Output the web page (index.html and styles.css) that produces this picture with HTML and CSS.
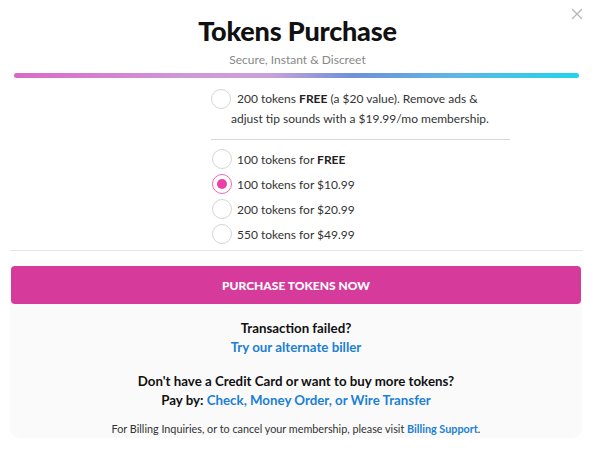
FILE: index.html
```html
<!DOCTYPE html>
<html>
<head>
<meta charset="utf-8">
<link rel="stylesheet" href="styles.css">
</head>
<body>
<div class="modal">
  <button class="close" aria-label="Close">
    <svg width="12" height="12" viewBox="0 0 12 12"><path d="M1 1L11 11M11 1L1 11" stroke="#b8b8b8" stroke-width="1.4" fill="none"/></svg>
  </button>
  <header class="head">
    <h1 class="title">Tokens Purchase</h1>
    <p class="subtitle">Secure, Instant &amp; Discreet</p>
  </header>
  <div class="bar"></div>
  <div class="options">
    <label class="opt opt-member"><span class="radio"></span>200 tokens <b>FREE</b> (a $20 value). Remove ads &amp;<br>adjust tip sounds with a $19.99/mo membership.</label>
    <div class="sep"></div>
    <label class="opt"><span class="radio"></span>100 tokens for <b>FREE</b></label>
    <label class="opt"><span class="radio on"></span>100 tokens for $10.99</label>
    <label class="opt"><span class="radio"></span>200 tokens for $20.99</label>
    <label class="opt"><span class="radio"></span>550 tokens for $49.99</label>
  </div>
  <div class="rule"></div>
  <button class="buy">PURCHASE TOKENS NOW</button>
  <div class="foot">
    <p class="q">Transaction failed?<br><a href="#">Try our alternate biller</a></p>
    <p class="q q2">Don't have a Credit Card or want to buy more tokens?<br>Pay by: <a href="#">Check, Money Order, or Wire Transfer</a></p>
    <p class="small">For Billing Inquiries, or to cancel your membership, please visit <a href="#">Billing Support</a>.</p>
  </div>
</div>
</body>
</html>
```
FILE: styles.css
```css
* { box-sizing: border-box; }
body { margin: 0; background: #fff; font-family: Lato, "Noto Sans", sans-serif; color: #333; }
.modal { position: relative; width: 595px; height: 451px; }
.close { position: absolute; top: 8px; right: 12px; border: 0; background: none; padding: 0; width: 12px; height: 12px; line-height: 0; }
.head { text-align: center; padding-top: 15px; }
.title { margin: 0; font-size: 27px; line-height: 32px; font-weight: 900; color: #111; letter-spacing: -0.2px; }
.subtitle { margin: 5px 0 0; font-size: 12px; line-height: 16px; color: #888; }
.bar { height: 5px; margin: 5px 16px 0 14px; border-radius: 3px;
  background: linear-gradient(90deg, #da68c9 0%, #cf98d8 30%, #c9a2dc 45%, #6f90d8 60%, #5fb6e2 78%, #20d4ee 100%); }
.options { width: 299px; margin: 11px 0 0 211px; }
.opt { display: block; font-size: 12px; line-height: 25px; height: 25px; color: #333; }
.opt b { font-weight: 700; color: #222; }
.opt-member { line-height: 20px; height: auto; padding-left: 20px; }
.radio { display: inline-block; width: 20px; height: 20px; border: 1px solid #d4d4d4; border-radius: 50%; vertical-align: top; margin: 2px 5px 0 1px; position: relative; background: #fff; }
.opt-member .radio { margin: 0 6px 0 -20px; }
.radio.on { border-color: #e46bb5; }
.radio.on::after { content: ""; position: absolute; left: 4px; top: 4px; width: 10px; height: 10px; border-radius: 50%; background: #ee3ea9; }
.sep { height: 1px; background: #d8d8d8; margin: 10px 0 7px; }
.rule { height: 1px; background: #e6e6e6; margin: 3px 12px 0 10px; }
.buy { display: block; width: 570px; height: 38px; margin: 15px 0 0 11px; border: 0; border-radius: 4px; background: #d63a9b; color: #fff; font-family: Lato, sans-serif; font-weight: 900; font-size: 12px; letter-spacing: 0; }
.foot { margin: 0 13px 0 10px; background: #fafafb; border-radius: 0 0 10px 10px; text-align: center; padding: 15px 0 2px; }
.q { margin: 0 0 15px; font-size: 13.3px; line-height: 19px; font-weight: 700; color: #111; }
.q2 { margin-bottom: 12px; }
.foot a { color: #1b7fd4; text-decoration: none; font-weight: 700; }
.small { margin: 0; font-size: 10.8px; line-height: 14px; color: #333; }
```
